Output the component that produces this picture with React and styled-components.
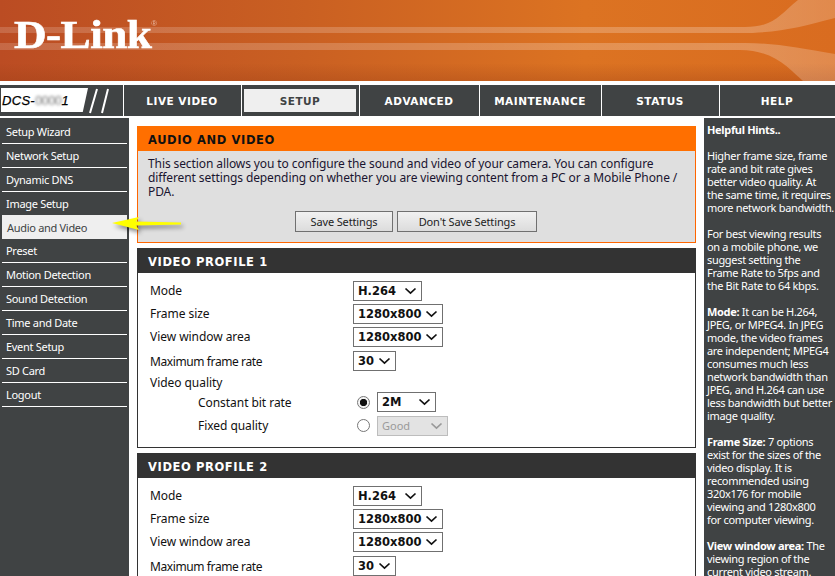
import React from 'react';
import styled, { createGlobalStyle } from 'styled-components';

const Global = createGlobalStyle`
  html, body { margin: 0; padding: 0; background: #fff; }
  body { font-family: "Noto Sans", "Liberation Sans", sans-serif; font-size: 12px; color: #111; }
`;

const Page = styled.div`
  position: relative;
  width: 835px;
  height: 576px;
  overflow: hidden;
  background: #fff;
`;

const Banner = styled.header`
  position: relative;
  height: 81px;
  margin-bottom: 4px;
  display: flex;
  align-items: flex-start;
  padding: 12px 0 0 14px;
  box-sizing: border-box;
  overflow: hidden;
  background:
    linear-gradient(180deg, rgba(150,60,20,0) 78%, rgba(150,60,20,.3) 100%),
    linear-gradient(90deg, #bb4c23 0%, #c95f22 35%, #dc7322 70%, #d96c20 100%);
`;

const BannerArt = styled.svg`
  position: absolute;
  inset: 0;
`;

const Logo = styled.div`
  position: relative;
  font-family: "Liberation Serif", serif;
  font-weight: 700;
  font-size: 40px;
  line-height: 46px;
  letter-spacing: -0.5px;
  color: #fff;
  white-space: nowrap;
  -webkit-text-stroke: 0.6px #fff;
  transform: scaleX(1.13);
  transform-origin: left center;
  & sup {
    font-family: "Liberation Sans", sans-serif;
    font-size: 7px;
    font-weight: 400;
    line-height: 0;
    position: relative;
    top: -8px;
    color: #e9b79f;
    -webkit-text-stroke: 0;
  }
`;

const Nav = styled.nav`
  display: grid;
  grid-template-columns: 123px 117px 117px 119px 121px 117px 1fr;
  column-gap: 1px;
  height: 31px;
  margin-bottom: 2px;
`;

const Brand = styled.div`
  position: relative;
  background: #404344;
  padding: 3px 0 4px 1px;
  box-sizing: border-box;
`;

const ModelBox = styled.div`
  width: 87px;
  height: 24px;
  background: #fff;
  clip-path: polygon(0 0, 100% 0, 94% 100%, 0 100%);
  font-family: "Liberation Sans", sans-serif;
  font-style: italic;
  font-size: 13px;
  line-height: 25px;
  letter-spacing: 0.3px;
  -webkit-text-stroke: 0.25px #000;
  padding-left: 1px;
  box-sizing: border-box;
  color: #000;
  white-space: nowrap;
`;

const Blurred = styled.span`
  display: inline-block;
  filter: blur(1.4px);
  color: #777;
  font-style: normal;
  letter-spacing: -0.6px;
  -webkit-text-stroke: 0;
`;

const Slashes = styled.svg`
  position: absolute;
  left: 86px;
  top: 3px;
`;

const Tab = styled.a`
  display: flex;
  background: #404344;
  padding: 4px 3px 4px 2px;
  box-sizing: border-box;
`;

const TabLabel = styled.span`
  flex: 1;
  display: flex;
  align-items: center;
  justify-content: center;
  font-family: "DejaVu Sans", sans-serif;
  font-weight: 700;
  font-size: 10.5px;
  letter-spacing: 0.5px;
  background: ${p => (p.$active ? '#efefef' : 'transparent')};
  color: ${p => (p.$active ? '#404344' : '#fff')};
`;

const Columns = styled.div`
  display: grid;
  grid-template-columns: 129px 559px 131px;
  column-gap: 8px;
  height: 458px;
`;

const Sidebar = styled.aside`
  background: #404344;
  padding: 2px 2px 0;
  box-sizing: border-box;
`;

const SideItem = styled.a`
  display: block;
  height: 24px;
  margin-top: ${p => (p.$active ? '-1px' : '0')};
  line-height: ${p => (p.$active ? '25px' : '23px')};
  box-sizing: border-box;
  padding-left: ${p => (p.$active ? '5px' : '4px')};
  font-size: 11px;
  letter-spacing: -0.3px;
  white-space: nowrap;
  color: ${p => (p.$active ? '#404344' : '#fff')};
  background: ${p => (p.$active ? '#efefef' : 'transparent')};
  border-bottom: 1px solid ${p => (p.$active ? '#efefef' : '#fff')};
`;

const Content = styled.main`
  padding-top: 8px;
  display: flex;
  flex-direction: column;
  gap: 5px;
`;

const Panel = styled.section`
  flex: none;
  box-sizing: border-box;
  border: 1px solid ${p => (p.$accent ? '#ff6600' : '#333')};
  background: ${p => (p.$accent ? '#dfdfdf' : '#fff')};
`;

const PanelTitle = styled.h2`
  margin: -1px -1px 0;
  height: 25px;
  padding-left: 11px;
  font-family: "DejaVu Sans", sans-serif;
  font-size: 11.5px;
  font-weight: 700;
  letter-spacing: 0.6px;
  line-height: 28px;
  white-space: nowrap;
  overflow: hidden;
  background: ${p => (p.$accent ? '#ff6f00' : '#333')};
  color: ${p => (p.$accent ? '#111' : '#fff')};
`;

const Intro = styled.p`
  margin: 0;
  padding: 6px 10px 0;
  height: 54px;
  box-sizing: border-box;
  font-size: 12px;
  line-height: 14px;
  letter-spacing: -0.1px;
  white-space: nowrap;
  color: #1a1530;
`;

const Actions = styled.div`
  display: flex;
  gap: 4px;
  padding: 6px 0 10px 157px;
`;

const Button = styled.button`
  height: 21px;
  width: ${p => p.$w}px;
  padding: 0;
  box-sizing: border-box;
  border: 1px solid #707070;
  background: linear-gradient(180deg, #f1f1f1, #dcdcdc);
  font-family: "Noto Sans", sans-serif;
  font-size: 11px;
  letter-spacing: -0.15px;
  color: #222;
`;

const Form = styled.div`
  padding: 6px 0 10px 12px;
`;

const Row = styled.div`
  display: flex;
  align-items: center;
  height: ${p => p.$h}px;
`;

const Label = styled.span`
  width: 203px;
  box-sizing: border-box;
  padding-left: ${p => (p.$indent ? '48px' : '0')};
  font-size: 12px;
  letter-spacing: ${p => (p.$tight ? '-0.4px' : '-0.05px')};
  white-space: nowrap;
  color: #111;
`;

const Select = styled.div`
  display: flex;
  align-items: center;
  justify-content: space-between;
  width: ${p => p.$w}px;
  height: 20px;
  padding: 0 4px 0 4px;
  box-sizing: border-box;
  border: 1px solid ${p => (p.$disabled ? '#bdbdbd' : '#707070')};
  background: ${p => (p.$disabled ? '#e3e3e3' : '#fff')};
  color: ${p => (p.$disabled ? '#9a9a9a' : '#111')};
  font-family: ${p => (p.$disabled ? '"Noto Sans", sans-serif' : '"DejaVu Sans", sans-serif')};
  font-weight: ${p => (p.$disabled ? 400 : 700)};
  font-size: ${p => (p.$disabled ? '11px' : '11.5px')};
  white-space: nowrap;
`;

const RadioWrap = styled.span`
  width: 24px;
  display: flex;
  justify-content: flex-start;
  padding-left: 4px;
  box-sizing: border-box;
`;

const Radio = styled.span`
  display: block;
  width: 13px;
  height: 13px;
  box-sizing: border-box;
  border-radius: 50%;
  border: 1px solid #777;
  background: ${p => (p.$on ? 'radial-gradient(circle, #111 0 3.4px, #f4f4f4 3.9px)' : '#fff')};
`;

const Hints = styled.aside`
  background: #404344;
  color: #fff;
  padding: 5px 0 0 3px;
  box-sizing: border-box;
  font-size: 11px;
  line-height: 13px;
  overflow: hidden;
`;

const HintBlock = styled.p`
  margin: 0 0 13px;
  white-space: nowrap;
  letter-spacing: -0.32px;
  & b { font-weight: 700; }
`;

const Arrow = styled.svg`
  position: absolute;
  left: 108px;
  top: 212px;
  overflow: visible;
  filter: drop-shadow(2px 3px 2px rgba(0,0,0,.45));
`;

const Chevron = ({ color = '#111' }) => (
  <svg width="13" height="8" viewBox="0 0 13 8" fill="none">
    <path d="M1.5 1.5 6.5 6.2 11.5 1.5" stroke={color} strokeWidth="1.7" />
  </svg>
);

const Dropdown = ({ value, w, disabled }) => (
  <Select $w={w} $disabled={disabled}>
    {value}
    <Chevron color={disabled ? '#999' : '#111'} />
  </Select>
);

const Profile = ({ n }) => (
  <Panel>
    <PanelTitle>VIDEO PROFILE {n}</PanelTitle>
    <Form>
      <Row $h={23}><Label>Mode</Label><Dropdown value="H.264" w={69} /></Row>
      <Row $h={23}><Label>Frame size</Label><Dropdown value="1280x800" w={90} /></Row>
      <Row $h={23}><Label>View window area</Label><Dropdown value="1280x800" w={90} /></Row>
      <Row $h={26}><Label $tight>Maximum frame rate</Label><Dropdown value="30" w={43} /></Row>
      <Row $h={16}><Label>Video quality</Label></Row>
      <Row $h={24}>
        <Label $indent>Constant bit rate</Label>
        <RadioWrap><Radio $on /></RadioWrap>
        <Dropdown value="2M" w={59} />
      </Row>
      <Row $h={23}>
        <Label $indent>Fixed quality</Label>
        <RadioWrap><Radio /></RadioWrap>
        <Dropdown value="Good" w={71} disabled />
      </Row>
    </Form>
  </Panel>
);

const menu = ['Setup Wizard','Network Setup','Dynamic DNS','Image Setup','Audio and Video','Preset','Motion Detection','Sound Detection','Time and Date','Event Setup','SD Card','Logout'];
const tabs = ['LIVE VIDEO','SETUP','ADVANCED','MAINTENANCE','STATUS','HELP'];

export default function App() {
  return (
    <Page>
      <Global />
      <Banner>
        <BannerArt width="835" height="81" viewBox="0 0 835 81">
          <defs>
            <linearGradient id="streak" x1="0" x2="835" y1="0" y2="0" gradientUnits="userSpaceOnUse">
              <stop offset="0" stopColor="#fff" stopOpacity=".16" />
              <stop offset=".5" stopColor="#fff" stopOpacity=".2" />
              <stop offset=".9" stopColor="#fff" stopOpacity=".24" />
              <stop offset="1" stopColor="#fff" stopOpacity=".2" />
            </linearGradient>
          </defs>
          <path fill="url(#streak)" d="M0 27H745C775 27 780 14 798 0H835V18C800 27 780 33 740 33H0Z" />
          <path fill="url(#streak)" d="M0 43H745C775 43 800 48 835 54V81H803C790 70 775 50 740 50H0Z" />
        </BannerArt>
        <Logo>D-Link<sup>®</sup></Logo>
      </Banner>
      <Nav>
        <Brand>
          <ModelBox>DCS-<Blurred>0000</Blurred>1</ModelBox>
          <Slashes width="26" height="26" viewBox="0 0 26 26">
            <path d="M11 1 4 25M22 1 16 25" stroke="#fff" strokeWidth="2" fill="none" />
          </Slashes>
        </Brand>
        {tabs.map(t => (
          <Tab key={t}><TabLabel $active={t === 'SETUP'}>{t}</TabLabel></Tab>
        ))}
      </Nav>
      <Columns>
        <Sidebar>
          {menu.map(m => <SideItem key={m} $active={m === 'Audio and Video'}>{m}</SideItem>)}
        </Sidebar>
        <Content>
          <Panel $accent>
            <PanelTitle $accent>AUDIO AND VIDEO</PanelTitle>
            <Intro>
              This section allows you to configure the sound and video of your camera. You can configure<br />
              different settings depending on whether you are viewing content from a PC or a Mobile Phone /<br />
              PDA.
            </Intro>
            <Actions>
              <Button $w={98}>Save Settings</Button>
              <Button $w={140}>Don't Save Settings</Button>
            </Actions>
          </Panel>
          <Profile n={1} />
          <Profile n={2} />
        </Content>
        <Hints>
          <HintBlock><b>Helpful Hints..</b></HintBlock>
          <HintBlock>Higher frame size, frame<br />rate and bit rate gives<br />better video quality. At<br />the same time, it requires<br />more network bandwidth.</HintBlock>
          <HintBlock>For best viewing results<br />on a mobile phone, we<br />suggest setting the<br />Frame Rate to 5fps and<br />the Bit Rate to 64 kbps.</HintBlock>
          <HintBlock><b>Mode:</b> It can be H.264,<br />JPEG, or MPEG4. In JPEG<br />mode, the video frames<br />are independent; MPEG4<br />consumes much less<br />network bandwidth than<br />JPEG, and H.264 can use<br />less bandwidth but better<br />image quality.</HintBlock>
          <HintBlock><b>Frame Size:</b> 7 options<br />exist for the sizes of the<br />video display. It is<br />recommended using<br />320x176 for mobile<br />viewing and 1280x800<br />for computer viewing.</HintBlock>
          <HintBlock><b>View window area:</b> The<br />viewing region of the<br />current video stream.</HintBlock>
        </Hints>
      </Columns>
      <Arrow width="75" height="20" viewBox="0 0 75 20">
        <path fill="#ffff00" d="M4 11 31 5 28 9.5 73 10.5 73 12.5 28 13.5 31 18Z" />
      </Arrow>
    </Page>
  );
}
